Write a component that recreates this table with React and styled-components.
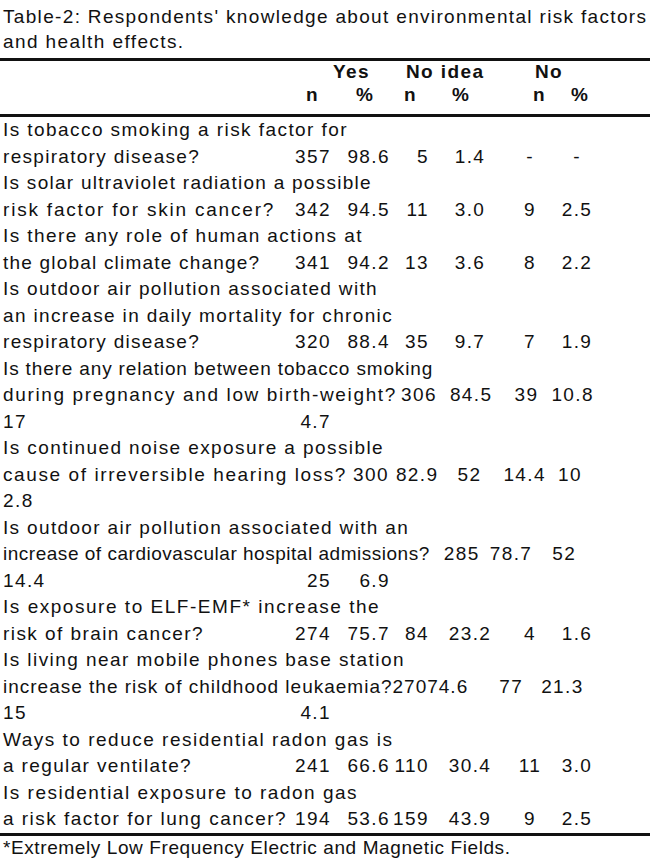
import React from "react";
import styled, { createGlobalStyle } from "styled-components";

const GlobalStyle = createGlobalStyle`
  html, body {
    margin: 0;
    padding: 0;
    background: #fff;
  }
  body {
    font-family: "Liberation Sans", Arial, sans-serif;
    color: #111;
  }
`;

// label | n | % | n | % | n | %
const COLS = "292px 39px 59px 39px 82px 38px 56px";
const ALIGN = ["left", "right", "right", "right", "center", "center", "center"];

const Page = styled.div`
  width: 650px;
  padding-top: 4px;
  font-size: 19px;
`;

const CaptionLine = styled.div`
  padding-left: 3px;
  line-height: 25px;
  letter-spacing: ${(p) => p.$track}px;
  white-space: nowrap;
`;

const Rule = styled.div`
  height: 3px;
  background: #111;
  margin-top: ${(p) => p.$top || 0}px;
`;

const HeadRow = styled.div`
  display: grid;
  grid-template-columns: ${(p) => p.$cols};
  height: ${(p) => p.$h}px;
  line-height: ${(p) => p.$h}px;
  font-weight: bold;
  letter-spacing: 1.4px;
  white-space: nowrap;
`;

const Body = styled.div`
  letter-spacing: 1.4px;
`;

const TextLine = styled.div`
  height: 26.5px;
  line-height: 26.5px;
  padding-left: 3px;
  white-space: nowrap;
  letter-spacing: ${(p) => p.$track}px;
`;

const DataLine = styled.div`
  display: grid;
  grid-template-columns: ${COLS};
  height: 26.5px;
  line-height: 26.5px;
  white-space: nowrap;
`;

const Cell = styled.span`
  text-align: ${(p) => p.$align};
`;

const Label = styled.span`
  padding-left: 3px;
  letter-spacing: ${(p) => p.$track}px;
`;

const FlowLine = styled.div`
  display: flex;
  height: 26.5px;
  line-height: 26.5px;
  padding-left: 3px;
  white-space: nowrap;
`;

const FlowText = styled.span`
  letter-spacing: ${(p) => p.$track}px;
`;

const Num = styled.span`
  margin-left: ${(p) => p.$lead}px;
`;

const Footnote = styled.div`
  padding-left: 3px;
  line-height: 23px;
  letter-spacing: 0.6px;
  white-space: nowrap;
`;

const rows = [
  {
    lines: [["Is tobacco smoking a risk factor for", 1.43]],
    label: ["respiratory disease?", 1.3],
    vals: ["357", "98.6", "5", "1.4", "-", "-"],
  },
  {
    lines: [["Is solar ultraviolet radiation a possible", 1.27]],
    label: ["risk factor for skin cancer?", 1.8],
    vals: ["342", "94.5", "11", "3.0", "9", "2.5"],
  },
  {
    lines: [["Is there any role of human actions at", 1.42]],
    label: ["the global climate change?", 1.2],
    vals: ["341", "94.2", "13", "3.6", "8", "2.2"],
  },
  {
    lines: [
      ["Is outdoor air pollution associated with", 1.32],
      ["an increase in daily mortality for chronic", 1.34],
    ],
    label: ["respiratory disease?", 1.3],
    vals: ["320", "88.4", "35", "9.7", "7", "1.9"],
  },
  {
    lines: [["Is there any relation between tobacco smoking", 0.85]],
    flow: {
      text: ["during pregnancy and low birth-weight?", 1.64],
      nums: [["306", 4], ["84.5", 13], ["39", 22], ["10.8", 13]],
    },
    tail: ["17", "4.7"],
  },
  {
    lines: [["Is continued noise exposure a possible", 1.41]],
    flow: {
      text: ["cause of irreversible hearing loss?", 1.59],
      nums: [["300", 6], ["82.9", 7], ["52", 19], ["14.4", 22], ["10", 12]],
    },
    tail: ["2.8"],
  },
  {
    lines: [["Is outdoor air pollution associated with an", 1.34]],
    flow: {
      text: ["increase of cardiovascular hospital admissions?", 0.52],
      nums: [["285", 14], ["78.7", 10], ["52", 20]],
    },
    tail: ["14.4", "25", "6.9"],
  },
  {
    lines: [["Is exposure to ELF-EMF* increase the", 1.53]],
    label: ["risk of brain cancer?", 1.43],
    vals: ["274", "75.7", "84", "23.2", "4", "1.6"],
  },
  {
    lines: [["Is living near mobile phones base station", 1.43]],
    flow: {
      text: ["increase the risk of childhood leukaemia?27074.6", 1.0],
      nums: [["77", 31], ["21.3", 18]],
    },
    tail: ["15", "4.1"],
  },
  {
    lines: [["Ways to reduce residential radon gas is", 1.5]],
    label: ["a regular ventilate?", 1.37],
    vals: ["241", "66.6", "110", "30.4", "11", "3.0"],
  },
  {
    lines: [["Is residential exposure to radon gas", 1.5]],
    label: ["a risk factor for lung cancer?", 1.48],
    vals: ["194", "53.6", "159", "43.9", "9", "2.5"],
  },
];

function Data({ label, track = 1.4, vals }) {
  return (
    <DataLine>
      <Label $track={track}>{label}</Label>
      {vals.map((v, i) => (
        <Cell key={i} $align={ALIGN[i + 1]}>
          {v}
        </Cell>
      ))}
    </DataLine>
  );
}

function Question({ row }) {
  return (
    <>
      {row.lines.map(([text, track]) => (
        <TextLine key={text} $track={track}>
          {text}
        </TextLine>
      ))}
      {row.label && <Data label={row.label[0]} track={row.label[1]} vals={row.vals} />}
      {row.flow && (
        <FlowLine>
          <FlowText $track={row.flow.text[1]}>{row.flow.text[0]}</FlowText>
          {row.flow.nums.map(([n, lead], i) => (
            <Num key={i} $lead={lead}>
              {n}
            </Num>
          ))}
        </FlowLine>
      )}
      {row.tail && <Data label={row.tail[0]} vals={row.tail.slice(1)} />}
    </>
  );
}

export default function App() {
  return (
    <>
      <GlobalStyle />
      <Page>
        <CaptionLine $track={1.33}>
          Table-2: Respondents' knowledge about environmental risk factors
        </CaptionLine>
        <CaptionLine $track={1.4}>and health effects.</CaptionLine>
        <Rule $top={4} />
        <HeadRow $cols="333px 73px 129px auto" $h={22}>
          <span />
          <span>Yes</span>
          <span>No idea</span>
          <span>No</span>
        </HeadRow>
        <HeadRow $cols="306px 50px 48px 48px 81px 38px auto" $h={24}>
          <span />
          <span>n</span>
          <span>%</span>
          <span>n</span>
          <span>%</span>
          <span>n</span>
          <span>%</span>
        </HeadRow>
        <Rule $top={7} />
        <Body>
          {rows.map((r, i) => (
            <Question key={i} row={r} />
          ))}
        </Body>
        <Rule />
        <Footnote>*Extremely Low Frequency Electric and Magnetic Fields.</Footnote>
      </Page>
    </>
  );
}
